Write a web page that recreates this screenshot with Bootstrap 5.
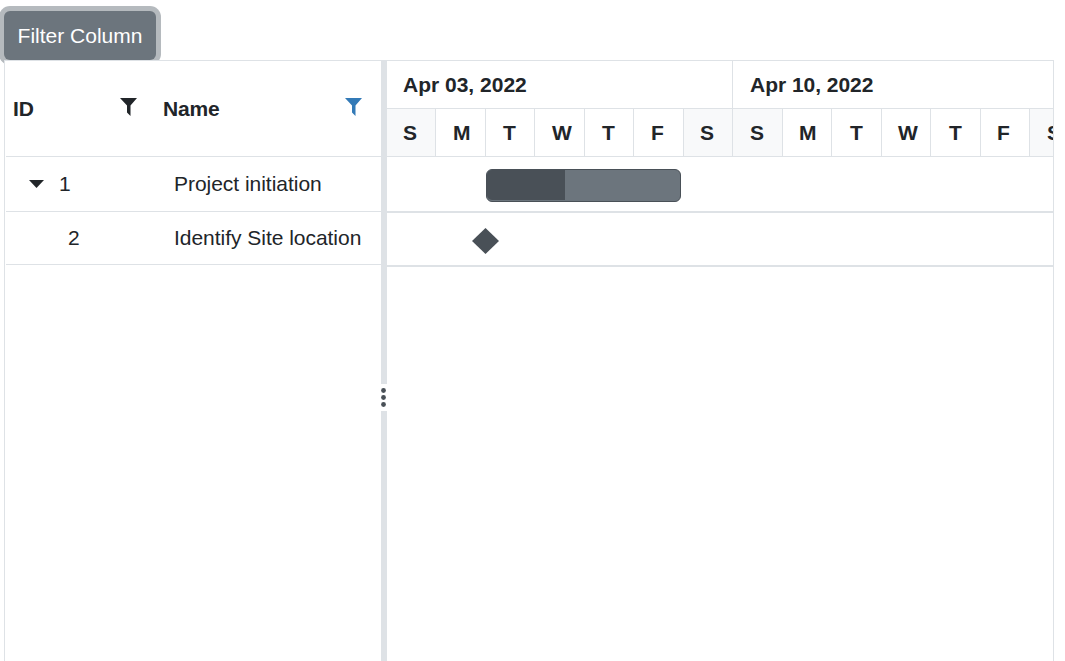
<!DOCTYPE html>
<html lang="en">
<head>
<meta charset="utf-8">
<meta name="viewport" content="width=device-width, initial-scale=1">
<title>Gantt</title>
<link href="https://cdn.jsdelivr.net/npm/bootstrap@5.3.0/dist/css/bootstrap.min.css" rel="stylesheet">
<style>
body{font-family:"Liberation Sans",Arial,sans-serif;font-size:21px;line-height:30px;color:#212529;height:661px}
.filter-btn,.filter-btn:hover{width:152px;height:49px;margin:11px 0 0 4px;padding:0;font-size:21px;line-height:49px;border:0;border-radius:6px;color:#fff;background:#6c757d;box-shadow:0 0 0 5px #b5babe}
.gantt{width:1050px;height:601px;margin-left:4px;border:1px solid #dee2e6;border-bottom:0}
.tree-pane{width:376px}
.tree-head{height:96px;border-bottom:1px solid #dee2e6;margin-left:1px}
.tree-row{margin-left:1px;border-bottom:1px solid #dee2e6}
.row-a{height:55px}.row-b{height:53px}
.id-col{width:149px}
.id-head{padding:0 17px 0 7px}
.name-head{padding:0 18px 0 8px}
.name-head span{letter-spacing:-.2px}
.funnel{margin-bottom:3px}
.name-cell{padding-left:19px;letter-spacing:-.03px}
.splitter{width:6px;background:#dee2e6}
.grip{position:absolute;left:-2px;top:323px;width:10px;height:27px;background:#fff}
.week{width:346px;height:48px;padding:9px 0 0 16px;border-right:1px solid #dee2e6;border-bottom:1px solid #dee2e6}
.week + .week{padding-left:17px;letter-spacing:-.03px}
.day{width:49px;height:48px;padding:9px 0 0 16px;border-right:1px solid #dee2e6;border-bottom:1px solid #dee2e6}
.day:nth-child(even){width:50px;padding-left:17px}
.day.tu{padding-left:17px}
.day:nth-child(even).tu{padding-left:18px}
.weekend{background:#f8f9fa}
.chart-row{border-bottom:2px solid #dee2e6}
.chart-a{height:56px;padding:12px 0 0 99px}
.chart-b{height:54px;padding:14px 0 0 85px}
.task{width:195px;height:33px;border:1px solid #495057;border-radius:6px;background:#6c757d}
.done{height:30px;background:#495057;border-radius:5px 0 0 5px}
</style>
</head>
<body class="bg-white overflow-hidden">
<button type="button" class="btn filter-btn d-block">Filter Column</button>
<main class="gantt d-flex position-relative bg-white">
  <section class="tree-pane flex-shrink-0">
    <div class="tree-head d-flex align-items-center fw-bold">
      <div class="id-col id-head d-flex justify-content-between align-items-center"><span>ID</span>
        <svg class="funnel" width="19" height="20" viewBox="0 0 19 20"><path d="M1 1H18L11.5 8.5V19L8 15.5V8.5Z" fill="#212529"/></svg></div>
      <div class="name-head flex-grow-1 d-flex justify-content-between align-items-center"><span>Name</span>
        <svg class="funnel" width="19" height="20" viewBox="0 0 19 20"><path d="M1 1H18L11.5 8.5V19L8 15.5V8.5Z" fill="#337ab7"/></svg></div>
    </div>
    <div class="tree-row row-a d-flex align-items-center">
      <div class="id-col d-flex align-items-center" style="padding-left:23px"><svg width="15" height="8" viewBox="0 0 15 8"><path d="M0 0H15L7.5 8Z" fill="#212529"/></svg><span style="padding-left:15px">1</span></div>
      <div class="name-cell">Project initiation</div>
    </div>
    <div class="tree-row row-b d-flex align-items-center">
      <div class="id-col" style="padding-left:62px">2</div>
      <div class="name-cell">Identify Site location</div>
    </div>
  </section>
  <div class="splitter flex-shrink-0 position-relative"><div class="grip"><svg class="d-block" width="10" height="27" viewBox="0 0 10 27" fill="#495057"><circle cx="4.5" cy="6.5" r="2.4"/><circle cx="4.5" cy="13.5" r="2.4"/><circle cx="4.5" cy="20.5" r="2.4"/></svg></div></div>
  <section class="flex-grow-1 overflow-hidden">
    <div class="d-flex fw-bold"><div class="week flex-shrink-0">Apr 03, 2022</div><div class="week flex-shrink-0">Apr 10, 2022</div></div>
    <div class="d-flex fw-bold">
      <div class="day flex-shrink-0 weekend">S</div><div class="day flex-shrink-0">M</div><div class="day tu flex-shrink-0">T</div><div class="day flex-shrink-0">W</div><div class="day tu flex-shrink-0">T</div><div class="day flex-shrink-0">F</div><div class="day flex-shrink-0 weekend">S</div><div class="day flex-shrink-0 weekend">S</div><div class="day flex-shrink-0">M</div><div class="day tu flex-shrink-0">T</div><div class="day flex-shrink-0">W</div><div class="day tu flex-shrink-0">T</div><div class="day flex-shrink-0">F</div><div class="day flex-shrink-0 weekend">S</div>
    </div>
    <div class="chart-row chart-a"><div class="task"><div class="done" style="width:78px"></div></div></div>
    <div class="chart-row chart-b"><svg class="d-block" width="27" height="28" viewBox="0 0 27 28"><path d="M13.5 1L27 14L13.5 27L0 14Z" fill="#495057"/></svg></div>
  </section>
</main>
<script src="https://cdn.jsdelivr.net/npm/bootstrap@5.3.0/dist/js/bootstrap.bundle.min.js"></script>
</body>
</html>
